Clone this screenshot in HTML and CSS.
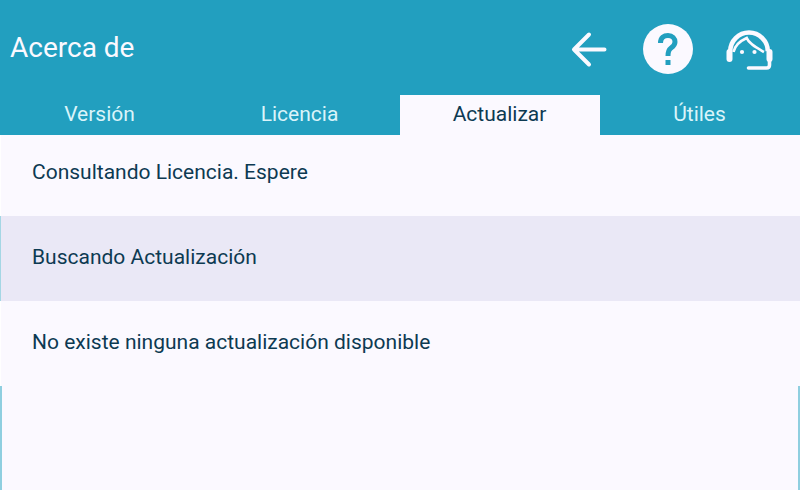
FILE: index.html

```html
<!DOCTYPE html>
<html lang="es">
<head>
  <meta charset="UTF-8">
  <title>Acerca de</title>
  <link rel="stylesheet" href="styles.css">
</head>
<body>
  <div class="header">
    <div class="title">Acerca de</div>
    <div class="actions">
      <svg class="icon-back" width="40" height="40" viewBox="0 0 40 40">
        <path d="M34.5 20.5H4M19 5.5L4 20.5l15 15" fill="none" stroke="#fbf9ff" stroke-width="4" stroke-linecap="round" stroke-linejoin="round"/>
      </svg>
      <svg class="icon-help" width="50" height="50" viewBox="0 0 50 50">
        <circle cx="25" cy="25" r="25" fill="#fbf9ff"/>
        <path d="M17.5 19C17.5 13.5 21 11.5 25 11.5C29.5 11.5 32 14.5 32 18C32 21.5 29.5 23 27.5 24.5C25.5 26 25 27.5 25 32" fill="none" stroke="#229fbf" stroke-width="5"/>
        <rect x="22.5" y="36" width="5" height="5" fill="#229fbf"/>
      </svg>
      <svg class="icon-support" width="48" height="50" viewBox="0 0 48 50">
        <path d="M5.2 27.3a18.8 18.8 0 0 1 37.6 0" fill="none" stroke="#fbf9ff" stroke-width="4.6"/>
        <path d="M8.5 28C10 21 15 17 21.7 14C24 20 32 24 39 28" fill="none" stroke="#fbf9ff" stroke-width="2.6"/>
        <rect x="1.5" y="25" width="6" height="13" rx="3" fill="#fbf9ff"/>
        <rect x="41.5" y="25" width="6" height="13" rx="3" fill="#fbf9ff"/>
        <circle cx="17" cy="28" r="2.1" fill="#fbf9ff"/>
        <circle cx="29.5" cy="28" r="2.1" fill="#fbf9ff"/>
        <path d="M44.5 36v5c0 2-1 3-3 3H23.5" fill="none" stroke="#fbf9ff" stroke-width="3.6" stroke-linecap="round"/>
      </svg>
    </div>
  </div>

  <div class="tabs">
    <div class="tab">Versión</div>
    <div class="tab">Licencia</div>
    <div class="tab active">Actualizar</div>
    <div class="tab">Útiles</div>
  </div>

  <div class="content">
    <div class="row first">Consultando Licencia. Espere</div>
    <div class="row alt">Buscando Actualización</div>
    <div class="row">No existe ninguna actualización disponible</div>
  </div>
</body>
</html>
```

FILE: styles.css

```css
body {
  margin: 0;
  height: 490px;
  overflow: hidden;
  display: flex;
  flex-direction: column;
  font-family: Roboto, sans-serif;
  background: #fbf9ff;
}
.header {
  height: 95px;
  flex-shrink: 0;
  display: flex;
  align-items: center;
  justify-content: space-between;
  background: #229fbf;
  padding-left: 10px;
  padding-right: 27px;
  padding-top: 3px;
  box-sizing: border-box;
}
.title {
  font-size: 28px;
  color: #fbf9ff;
  margin-top: -3px;
}
.actions {
  display: flex;
  align-items: center;
}
.icon-back {
  margin-right: 33px;
}
.icon-help {
  margin-right: 32px;
}
.tabs {
  display: flex;
  height: 40px;
  flex-shrink: 0;
  background: #229fbf;
}
.tab {
  flex: 1;
  padding-right: 1px;
  text-align: center;
  line-height: 38px;
  font-size: 21px;
  color: #daf4fa;
}
.tab.active {
  background: #fbf9ff;
  color: #0d3a52;
}
.content {
  flex: 1;
  border-left: 2px solid #8fcfe0;
  border-right: 2px solid #8fcfe0;
}
.row {
  height: 85px;
  margin: 0 -2px;
  padding: 0 0 4px 31px;
  box-sizing: border-box;
  border-left: 1px solid #fff;
  display: flex;
  align-items: center;
  font-size: 21px;
  color: #0d3a52;
  background: #fbf9ff;
}
.row.first {
  height: 81px;
  padding-bottom: 8px;
}
.row.alt {
  background: #eae8f6;
  border-left-color: #a4d6e4;
}
```
